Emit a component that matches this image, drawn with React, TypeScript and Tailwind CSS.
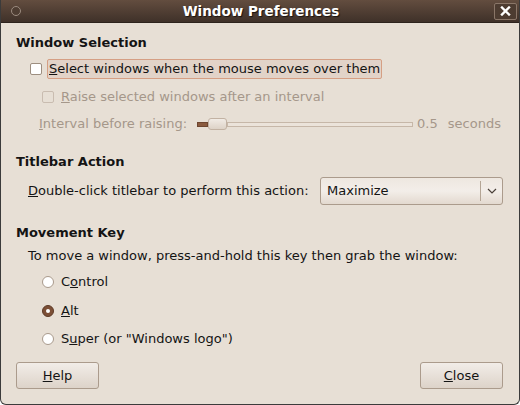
import React from 'react';

const font = { fontFamily: '"DejaVu Sans", "Liberation Sans", sans-serif' };

const Radio = ({ checked, label }: { checked?: boolean; label: React.ReactNode }) => (
  <div className="flex items-center h-[20px]">
    <span
      className={`w-[12px] h-[12px] rounded-full border flex items-center justify-center ${
        checked ? 'bg-[#7c4f36] border-[#5e3a26]' : 'bg-white border-[#a99a8c]'
      }`}
    >
      {checked && <span className="w-[4px] h-[4px] rounded-full bg-white" />}
    </span>
    <span className="ml-[7px]">{label}</span>
  </div>
);

export default function App() {
  return (
    <div className="w-[520px] h-[405px] bg-[#e7dfd5] text-[13px] leading-[16px] text-[#141414] flex flex-col border-x border-b border-[#3b3b3b] rounded-b-[6px] overflow-hidden" style={font}>
      {/* titlebar */}
      <div className="h-[23px] shrink-0 bg-gradient-to-b from-[#634d3f] to-[#3f3129] border-b border-[#2d231d] flex items-center relative">
        <span className="ml-[10px] w-[10px] h-[10px] rounded-full border border-[#9b8b7f] bg-[#4e3d32]" />
        <span className="flex-1 pl-[7px] text-center text-white font-bold text-[13.5px] [text-shadow:1px_1px_1px_#1a1310]">Window Preferences</span>
        <span className="mr-[2px] w-[23px] h-[17px] border border-[#8a7668] rounded-[2px] bg-[#4d3c31] flex items-center justify-center">
          <svg width="11" height="10" viewBox="0 0 11 10">
            <path d="M2 1.5 L9 8.5 M9 1.5 L2 8.5" stroke="white" strokeWidth="2.4" strokeLinecap="square" />
          </svg>
        </span>
      </div>

      <div className="flex flex-col pl-[15px] pr-[16px]">
        <div className="mt-[12px] font-bold">Window Selection</div>

        <div className="mt-[8px] flex items-center h-[20px] pl-[14px]">
          <span className="w-[12px] h-[12px] bg-white border border-[#9d8e80] rounded-[2px]" />
          <span className="ml-[5px] h-[20px] px-[1px] flex items-center border border-[#d59f84] bg-[#e2d3c8] rounded-[2px]">
            <span><u>S</u>elect windows when the mouse moves over them</span>
          </span>
        </div>

        <div className="mt-[8px] flex items-center h-[20px] pl-[26px] text-[#a5978a]">
          <span className="w-[12px] h-[12px] border border-[#c9bcb0] rounded-[2px]" />
          <span className="ml-[7px]"><u>R</u>aise selected windows after an interval</span>
        </div>

        <div className="mt-[7px] flex items-center h-[20px] pl-[23px] text-[#a5978a]">
          <span><u>I</u>nterval before raising:</span>
          <div className="ml-[10px] flex items-center w-[216px]">
            <span className="w-[11px] h-[5px] bg-[#8a5a3e] border border-[#6e4630]" />
            <span className="w-[19px] h-[12px] rounded-[3px] border border-[#c2b2a3] bg-gradient-to-b from-[#f1ebe5] to-[#ddd2c7]" />
            <span className="flex-1 h-[5px] border border-[#c6b7a8] bg-[#ebe3da]" />
          </div>
          <span className="ml-[4px]">0.5</span>
          <span className="ml-[10px]">seconds</span>
        </div>

        <div className="mt-[20px] font-bold">Titlebar Action</div>

        <div className="mt-[7px] flex items-center pl-[12px]">
          <span><u>D</u>ouble-click titlebar to perform this action:</span>
          <div className="ml-auto w-[183px] h-[28px] flex items-center rounded-[3px] border border-[#ab9b8c] bg-gradient-to-b from-[#eee7e0] via-[#f3eee9] to-[#e3d9cf]">
            <span className="flex-1 pl-[6px]">Maximize</span>
            <span className="w-[1px] h-[20px] bg-[#b4a595]" />
            <span className="w-[21px] flex items-center justify-center">
              <svg width="10" height="6" viewBox="0 0 10 6">
                <path d="M1 1 L5 5 L9 1" stroke="#4a4038" strokeWidth="1.2" fill="none" />
              </svg>
            </span>
          </div>
        </div>

        <div className="mt-[20px] font-bold">Movement Key</div>
        <div className="mt-[7px] pl-[12px]">To move a window, press-and-hold this key then grab the window:</div>

        <div className="mt-[8px] flex flex-col gap-[9px] pl-[26px]">
          <Radio label={<>C<u>o</u>ntrol</>} />
          <Radio checked label={<><u>A</u>lt</>} />
          <div className="-mt-[1px]">
            <Radio label={<>S<u>u</u>per (or "Windows logo")</>} />
          </div>
        </div>

        <div className="mt-[13px] flex justify-between">
          <button className="w-[83px] h-[27px] rounded-[3px] border border-[#ab9b8c] bg-gradient-to-b from-[#f2ede8] to-[#ddd3c9]"><u>H</u>elp</button>
          <button className="w-[83px] h-[27px] rounded-[3px] border border-[#ab9b8c] bg-gradient-to-b from-[#f2ede8] to-[#ddd3c9]"><u>C</u>lose</button>
        </div>
      </div>
    </div>
  );
}
